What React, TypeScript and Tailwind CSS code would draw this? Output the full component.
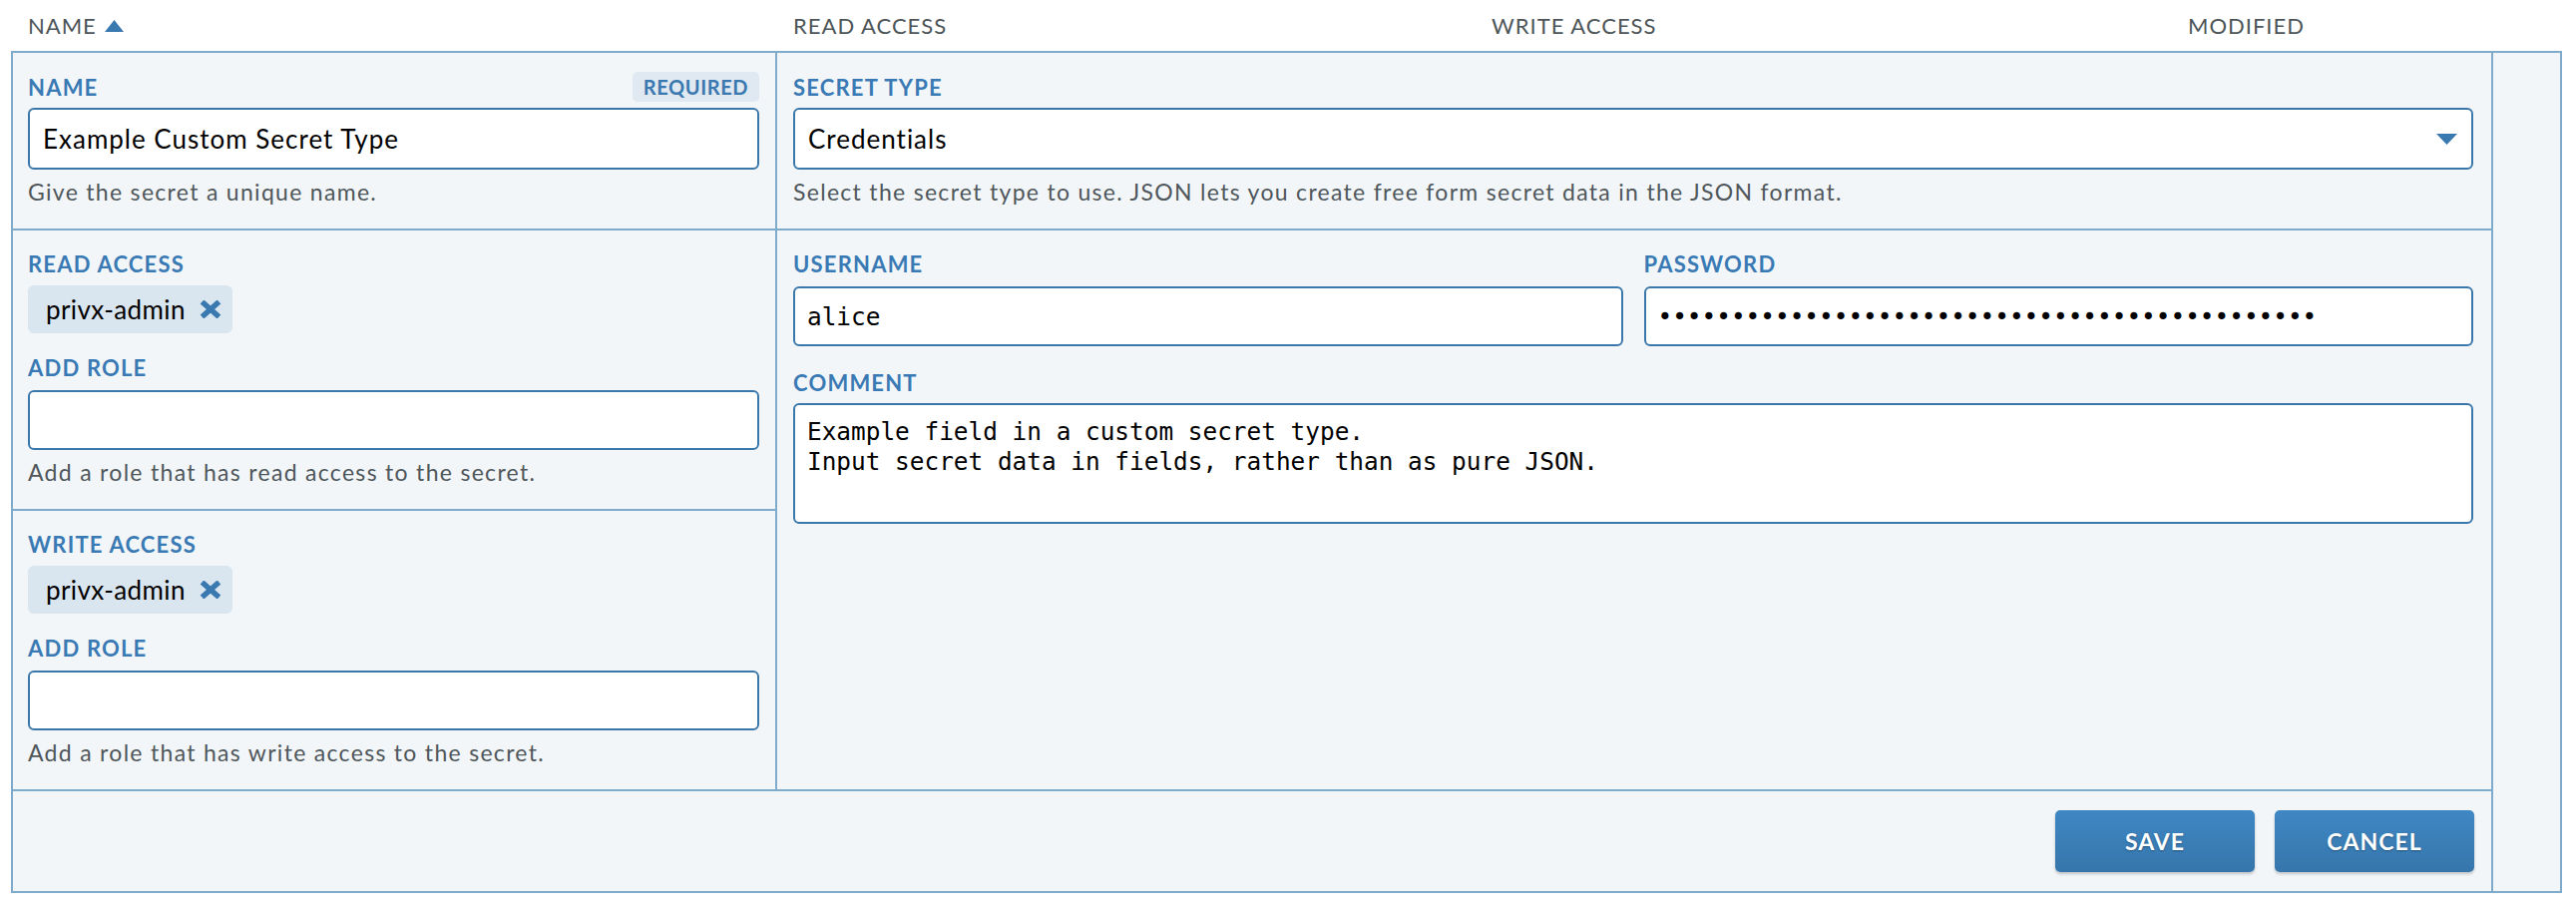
import React from 'react'

function Label({ children, badge }: { children: React.ReactNode; badge?: string }) {
  return (
    <div className="flex h-[30px] items-center justify-between">
      <span className="text-[22px] font-bold uppercase tracking-[1.2px] text-[#3a7ab4]">{children}</span>
      {badge && (
        <span className="flex h-[30px] w-[127px] items-center justify-center rounded-[5px] bg-[#e0e8f1] text-[20px] font-bold tracking-[0.6px] text-[#3a78b0]">
          {badge}
        </span>
      )}
    </div>
  )
}

function Help({ children }: { children: React.ReactNode }) {
  return (
    <p className="mt-[7px] h-[30px] whitespace-nowrap text-[23px] leading-[30px] tracking-[1.3px] text-[#4f575b]">
      {children}
    </p>
  )
}

function RoleChip({ name }: { name: string }) {
  return (
    <div className="mt-[7px] flex h-[48px] w-fit items-center gap-[14px] rounded-[6px] bg-[#d9e5ef] pl-[18px] pr-[11px]">
      <span className="text-[26px] tracking-[0.4px] text-black">{name}</span>
      <svg width="22" height="18" viewBox="0 0 22 18">
        <path d="M2.5 1.5 L19.5 16.5 M19.5 1.5 L2.5 16.5" stroke="#3a78b0" strokeWidth="5.5" strokeLinecap="butt" fill="none" />
      </svg>
    </div>
  )
}

const inputCls =
  'block w-full rounded-[6px] border-2 border-[#3a77ab] bg-white outline-none text-black'

function AccessSection({ title, verb, last }: { title: string; verb: string; last?: boolean }) {
  return (
    <div className={`border-r-2 border-[#7eaacb] pl-[15px] pr-[16px] pt-[18px] pb-[22px] ${last ? '' : 'border-b-2'}`}>
      <Label>{title}</Label>
      <RoleChip name="privx-admin" />
      <div className="mt-[19px]">
        <Label>Add Role</Label>
      </div>
      <input readOnly className={`${inputCls} mt-[8px] h-[60px]`} />
      <Help>Add a role that has {verb} access to the secret.</Help>
    </div>
  )
}

export default function App() {
  const mono = "font-['DejaVu_Sans_Mono',monospace] text-[24.4px]"
  return (
    <div className="h-[910px] w-[2582px] bg-white font-['Lato',sans-serif]">
      <div className="flex h-[51px] items-center pl-[28px] text-[22px] uppercase tracking-[1px] text-[#4d5558]">
        <div className="flex w-[767px] items-center gap-[8px]">
          Name
          <svg width="19" height="12" viewBox="0 0 19 12">
            <path d="M9.5 0 L19 12 L0 12 Z" fill="#3a78b0" />
          </svg>
        </div>
        <div className="w-[700px]">Read Access</div>
        <div className="w-[698px]">Write Access</div>
        <div>Modified</div>
      </div>

      <div className="ml-[11px] flex w-[2557px] border-2 border-[#7eaacb] bg-[#f2f6f9]">
        <div className="flex flex-1 flex-col">
          <div className="grid grid-cols-[766px_1fr]">
            <div className="border-b-2 border-r-2 border-[#7eaacb] pl-[15px] pr-[16px] pt-[19px] pb-[22px]">
              <Label badge="REQUIRED">Name</Label>
              <input
                readOnly
                value="Example Custom Secret Type"
                className={`${inputCls} mt-[6px] h-[62px] pl-[13px] text-[26px] tracking-[1px]`}
              />
              <Help>Give the secret a unique name.</Help>
            </div>
            <div className="border-b-2 border-[#7eaacb] pl-[16px] pr-[18px] pt-[19px] pb-[22px]">
              <Label>Secret Type</Label>
              <div className={`${inputCls} mt-[6px] flex h-[62px] items-center pl-[13px] pr-[14px] text-[26px] tracking-[1px]`}>
                Credentials
                <svg className="ml-auto" width="21" height="11" viewBox="0 0 21 11">
                  <path d="M0 0 L21 0 L10.5 11 Z" fill="#3a78b0" />
                </svg>
              </div>
              <Help>
                Select the secret type to use. JSON lets you create free form secret data in the JSON format.
              </Help>
            </div>

            <AccessSection title="Read Access" verb="read" />
            <div className="row-span-2 pl-[16px] pr-[18px] pt-[18px]">
              <div className="flex gap-[21px]">
                <div className="flex-1">
                  <Label>Username</Label>
                  <input readOnly value="alice" className={`${inputCls} ${mono} mt-[8px] h-[60px] pl-[12px]`} />
                </div>
                <div className="flex-1">
                  <Label>Password</Label>
                  <input
                    readOnly
                    value={'•'.repeat(45)}
                    className={`${inputCls} ${mono} mt-[8px] h-[60px] pl-[12px]`}
                  />
                </div>
              </div>
              <div className="mt-[21px]">
                <Label>Comment</Label>
              </div>
              <textarea
                readOnly
                value={'Example field in a custom secret type.\nInput secret data in fields, rather than as pure JSON.'}
                className={`${inputCls} ${mono} mt-[6px] h-[121px] resize-none px-[12px] pt-[12px] leading-[30px]`}
              />
            </div>
            <AccessSection title="Write Access" verb="write" last />
          </div>

          <div className="flex justify-end gap-[20px] border-t-2 border-[#7eaacb] pt-[19px] pb-[19px] pr-[17px]">
            {['Save', 'Cancel'].map((b) => (
              <button
                key={b}
                className="h-[62px] w-[200px] rounded-[5px] bg-gradient-to-b from-[#3f87c4] to-[#3676ab] text-[23px] font-bold uppercase tracking-[1px] text-white shadow-[0_2px_3px_rgba(0,0,0,0.2)] [text-shadow:0_1px_2px_rgba(0,0,0,0.3)]"
              >
                {b}
              </button>
            ))}
          </div>
        </div>
        <div className="w-[69px] border-l-2 border-[#7eaacb]" />
      </div>
    </div>
  )
}
